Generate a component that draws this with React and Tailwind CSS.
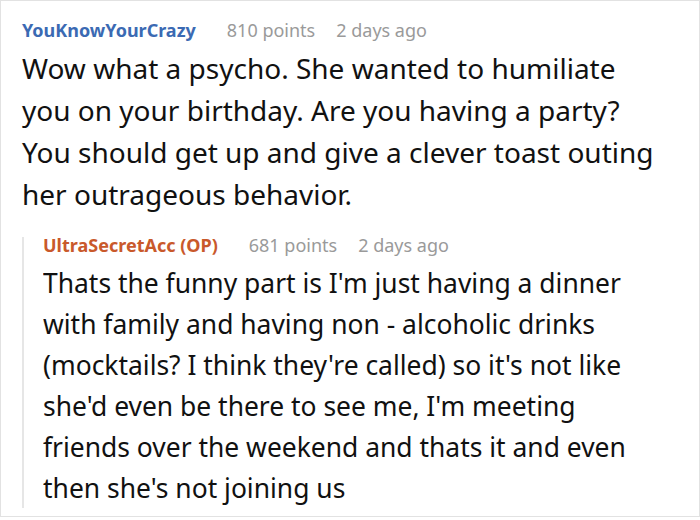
import React from "react";

const Meta = ({ name, nameColor, points, time, className = "" }) => (
  <div className={`flex items-baseline text-[18px] ${className}`}>
    <span className={`font-bold ${nameColor}`}>{name}</span>
    <span className="ml-[31px] text-[#9a9a9a]">{points} points</span>
    <span className="ml-[21px] text-[#9a9a9a]">{time}</span>
  </div>
);

const replyLines = [
  "Thats the funny part is I'm just having a dinner",
  "with family and having non - alcoholic drinks",
  "(mocktails? I think they're called) so it's not like",
  "she'd even be there to see me, I'm meeting",
  "friends over the weekend and thats it and even",
  "then she's not joining us",
];

const commentLines = [
  "Wow what a psycho. She wanted to humiliate",
  "you on your birthday. Are you having a party?",
  "You should get up and give a clever toast outing",
  "her outrageous behavior.",
];

export default function App() {
  return (
    <div
      className="w-[700px] h-[517px] bg-white border border-[#e2e2e2] pl-[21px] pt-[17px] text-[#111]"
      style={{ fontFamily: '"Noto Sans", "Open Sans", sans-serif' }}
    >
      <Meta
        name="YouKnowYourCrazy"
        nameColor="text-[#3b6ab3]"
        points="810"
        time="2 days ago"
        className="leading-[24px]"
      />
      <div className="mt-[5px] text-[28px] leading-[42px] whitespace-nowrap">
        {commentLines.map((line) => (
          <div key={line}>{line}</div>
        ))}
      </div>

      <div className="mt-[27px] border-l-2 border-[#e6e6e6] pl-[19px]">
        <Meta
          name="UltraSecretAcc (OP)"
          nameColor="text-[#c9592b]"
          points="681"
          time="2 days ago"
          className="leading-[17px] -mt-[5px]"
        />
        <div className="mt-[8px] text-[28px] leading-[41px] whitespace-nowrap origin-left scale-x-[0.944]">
          {replyLines.map((line) => (
            <div key={line}>{line}</div>
          ))}
        </div>
      </div>
    </div>
  );
}
